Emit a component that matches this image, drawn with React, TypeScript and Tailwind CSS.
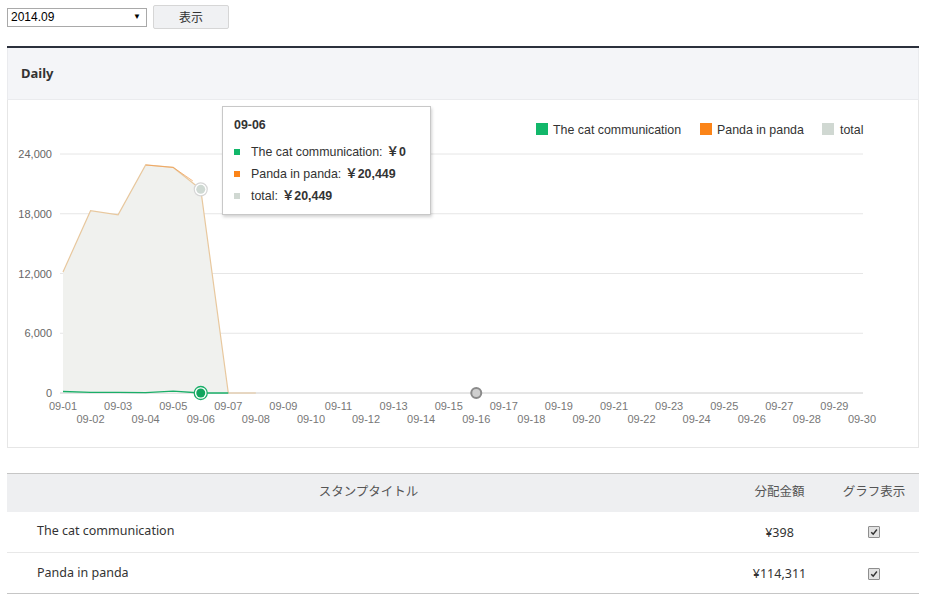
import React from "react";

const X0 = 63;
const STEP = 27.55;
const Y0 = 393;
const PX_PER = 59.75 / 6000;

const xAt = (i: number) => X0 + i * STEP;
const yAt = (v: number) => Y0 - v * PX_PER;

const total = [12150, 18300, 17900, 22900, 22650, 20449, 0];
const cat = [150, 60, 70, 40, 190, 0, 0];
const days = Array.from({ length: 30 }, (_, i) => `09-${String(i + 1).padStart(2, "0")}`);
const yTicks = [0, 6000, 12000, 18000, 24000];

function Chart() {
  const totalPts = total.map((v, i) => `${xAt(i)},${yAt(v)}`).join(" ");
  const areaPts = `${xAt(0)},${Y0} ${totalPts} ${xAt(6)},${Y0}`;
  const catPts = cat.map((v, i) => `${xAt(i)},${yAt(v)}`).join(" ");

  return (
    <svg viewBox="8 100 910 347" width={910} height={347} className="block" style={{ fontFamily: '"Liberation Sans", Arial, sans-serif' }}>
      {yTicks.map((t) => (
        <g key={t}>
          <line x1={60} x2={863} y1={yAt(t)} y2={yAt(t)} stroke={t === 0 ? "#cccccc" : "#e6e6e6"} strokeWidth={1} />
          <text x={52} y={yAt(t) + 4} textAnchor="end" fontSize={11} fill="#666">
            {t.toLocaleString("en-US")}
          </text>
        </g>
      ))}
      {days.map((d, i) => (
        <text key={d} x={xAt(i)} y={i % 2 === 0 ? 410 : 423} textAnchor="middle" fontSize={11} fill="#777">
          {d}
        </text>
      ))}

      <polygon points={areaPts} fill="#f0f1ee" />
      <polyline points={`${totalPts} ${xAt(7)},${Y0}`} fill="none" stroke="#e8c89e" strokeWidth={1.2} />
      <polyline points={`${xAt(3)},${yAt(22900)} ${xAt(4)},${yAt(22650)} ${xAt(5) - 8},${yAt(21300)}`} fill="none" stroke="#f29a4a" strokeWidth={1} opacity={0.7} />
      <polyline points={catPts} fill="none" stroke="#1aae68" strokeWidth={1.3} />

      <circle cx={xAt(5)} cy={yAt(20449)} r={6.5} fill="#fff" stroke="#d6d6d6" strokeWidth={1.2} />
      <circle cx={xAt(5)} cy={yAt(20449)} r={4.5} fill="#cfd9d3" />
      <circle cx={xAt(5)} cy={Y0} r={6.5} fill="#fff" stroke="#1aae68" strokeWidth={1.3} />
      <circle cx={xAt(5)} cy={Y0} r={4.5} fill="#12a55e" />
      <circle cx={xAt(15)} cy={Y0} r={5} fill="#cfcfcf" stroke="#8a8a8a" strokeWidth={2} />

      <g fontSize={12.4} fill="#333">
        <rect x={536} y={123} width={12} height={12} fill="#12b76a" />
        <text x={553} y={133.5}>The cat communication</text>
        <rect x={700} y={123} width={12} height={12} fill="#fb8418" />
        <text x={717} y={133.5}>Panda in panda</text>
        <rect x={822} y={123} width={12} height={12} fill="#d0d8d2" />
        <text x={840} y={133.5}>total</text>
      </g>
    </svg>
  );
}

function Tooltip() {
  const rows = [
    { color: "bg-[#12b76a]", label: "The cat communication:", value: "￥0" },
    { color: "bg-[#fb8418]", label: "Panda in panda:", value: "￥20,449" },
    { color: "bg-[#d0d8d2]", label: "total:", value: "￥20,449" },
  ];
  return (
    <div className="absolute left-[214px] top-[6px] w-[209px] h-[109px] bg-white border border-[#c8c8c8] shadow-[1px_2px_3px_rgba(0,0,0,0.18)] px-[11px] pt-[11px] font-['Liberation_Sans',Arial,sans-serif] text-[12.4px] text-[#333]">
      <div className="font-bold leading-[14px]">09-06</div>
      <div className="mt-[13px] flex flex-col gap-[8px]">
        {rows.map((r) => (
          <div key={r.label} className="flex items-center leading-[14px]">
            <span className={`w-[6px] h-[6px] ${r.color} mr-[11px]`} />
            <span>{r.label}</span>
            <span className="ml-[4px] font-bold font-['Liberation_Sans','Noto_Sans_CJK_JP',sans-serif]">{r.value}</span>
          </div>
        ))}
      </div>
    </div>
  );
}

function Check() {
  return (
    <span className="inline-flex w-[12px] h-[12px] border border-[#8e8e8e] bg-[#e2e2e2] items-center justify-center rounded-[1px]">
      <svg viewBox="0 0 10 10" width={8} height={8}>
        <path d="M1.5 5.2 L4 7.6 L8.6 1.8" fill="none" stroke="#333" strokeWidth={1.8} />
      </svg>
    </span>
  );
}

export default function App() {
  const items = [
    { title: "The cat communication", amount: "¥398" },
    { title: "Panda in panda", amount: "¥114,311" },
  ];

  return (
    <div className="w-[939px] h-[611px] bg-white font-['Noto_Sans','Noto_Sans_CJK_JP',sans-serif] text-[#333]">
      {/* period selector */}
      <div className="flex items-center pl-[7px] pt-[5px] gap-[6px]">
        <div className="w-[140px] h-[19px] border border-[#a9a9a9] flex items-center justify-between px-[3px] font-['Liberation_Sans',Arial,sans-serif] text-[12px] text-black">
          <span>2014.09</span>
          <span className="text-[8px] mr-[2px]">▼</span>
        </div>
        <button className="w-[76px] h-[24px] bg-[#f0f1f3] border border-[#d6d6d6] rounded-[2px] text-[12px] text-[#333] font-['Noto_Sans_CJK_JP',sans-serif]">
          表示
        </button>
      </div>

      {/* daily chart panel */}
      <div className="mt-[17px] mx-[7px] w-[912px] border-t-2 border-[#2b303c]">
        <div className="h-[52px] bg-[#f4f5f8] border-x border-b border-[#eaebee] flex items-center pl-[13px]">
          <span className="font-bold text-[13px] text-[#333]">Daily</span>
        </div>
        <div className="relative border-x border-b border-[#e6e6e6]">
          <Chart />
          <Tooltip />
        </div>
      </div>

      {/* stamp table */}
      <table className="mt-[25px] ml-[7px] w-[912px] border-collapse text-[12.5px]">
        <thead>
          <tr className="h-[38px] bg-[#eeeff1] border-t border-[#c6c6c6] text-[#555]">
            <th className="w-[723px] font-normal text-center">スタンプタイトル</th>
            <th className="w-[99px] font-normal text-center">分配金額</th>
            <th className="font-normal text-center">グラフ表示</th>
          </tr>
        </thead>
        <tbody>
          {items.map((it, i) => (
            <tr key={it.title} className={`h-[41px] border-b ${i === items.length - 1 ? "border-[#c6c6c6]" : "border-[#e8e8e8]"}`}>
              <td className="pl-[30px] text-[#333]">{it.title}</td>
              <td className="text-center text-[#333] pt-[3px]">{it.amount}</td>
              <td className="text-center pt-[2px]">
                <Check />
              </td>
            </tr>
          ))}
        </tbody>
      </table>
    </div>
  );
}
